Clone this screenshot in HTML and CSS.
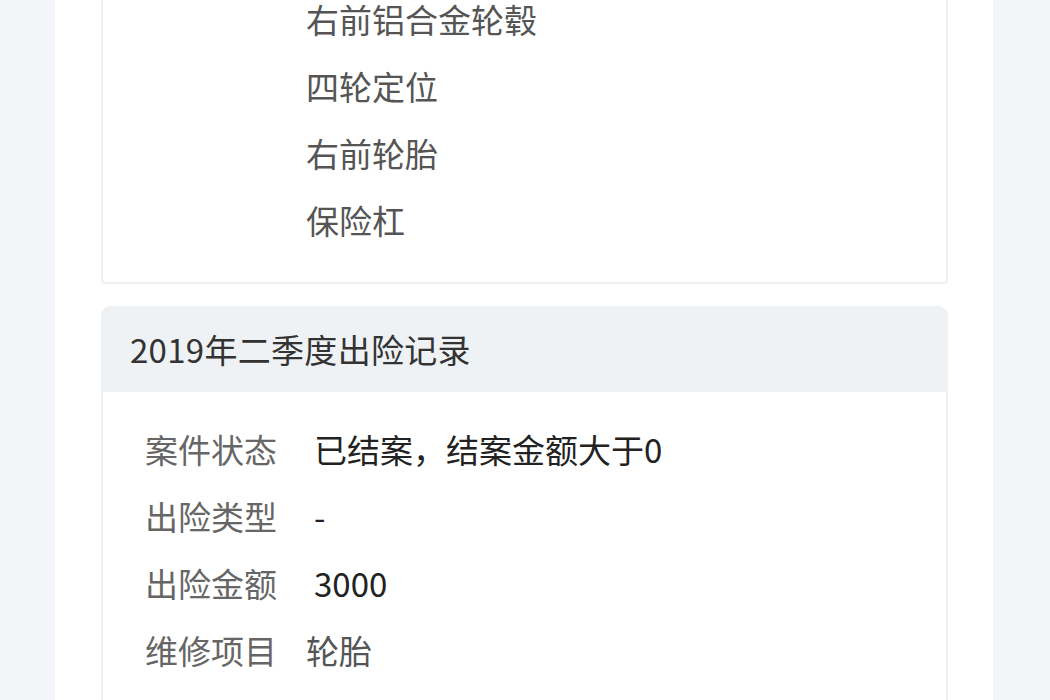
FILE: index.html
```html
<!DOCTYPE html>
<html lang="zh-CN">
<head>
  <meta charset="UTF-8">
  <meta name="viewport" content="width=device-width, initial-scale=1.0">
  <title>出险记录</title>
  <link rel="stylesheet" href="styles.css">
</head>
<body>
  <div class="page">
    <!-- previous record, scrolled partly out of view -->
    <div class="card card-top">
      <div class="row">
        <div class="label"></div>
        <ul class="items">
          <li>右前铝合金轮毂</li>
          <li>四轮定位</li>
          <li>右前轮胎</li>
          <li>保险杠</li>
        </ul>
      </div>
    </div>

    <div class="card">
      <div class="card-header">2019年二季度出险记录</div>
      <div class="card-body">
        <div class="row">
          <div class="label">案件状态</div>
          <div class="value">已结案，结案金额大于0</div>
        </div>
        <div class="row">
          <div class="label">出险类型</div>
          <div class="value">-</div>
        </div>
        <div class="row">
          <div class="label">出险金额</div>
          <div class="value">3000</div>
        </div>
        <div class="row">
          <div class="label">维修项目</div>
          <ul class="items">
            <li>轮胎</li>
          </ul>
        </div>
      </div>
    </div>
  </div>
</body>
</html>
```

FILE: styles.css
```css
/* General Styles */
html, body {
  margin: 0;
  padding: 0;
  height: 100%;
  overflow: hidden;
}

body {
  font-family: 'Noto Sans CJK SC', 'Noto Sans', sans-serif;
  background-color: #f4f5f9;
  color: #333;
}

.page {
  width: 938px;
  height: 700px;
  margin-left: 55px;
  background-color: #fff;
  padding: 0 45px 0 46px;
  box-sizing: border-box;
  overflow: hidden;
}

/* Cards */
.card {
  border: 2px solid #f0f1f3;
  border-radius: 10px;
  margin-bottom: 22px;
}

.card-top {
  border-top: none;
  border-radius: 0 0 4px 4px;
  margin-top: -14px;
  padding-bottom: 28px;
}

.card-header {
  margin: -2px -2px 0;
  height: 86px;
  padding-left: 29px;
  display: flex;
  align-items: center;
  font-size: 33px;
  letter-spacing: 0.3px;
  color: #333;
  background-color: #eff2f5;
  border-radius: 10px 10px 0 0;
}

.card-body {
  padding: 24px 0 40px;
}

/* Rows */
.row {
  display: flex;
  padding-left: 42px;
  font-size: 33px;
  line-height: 67px;
}

.label {
  width: 132px;
  flex-shrink: 0;
  margin-right: 29px;
  color: #666;
}

.value {
  padding-left: 8px;
  color: #222;
}

.items {
  list-style: none;
  margin: 0;
  padding: 0;
  color: #555;
}
```
